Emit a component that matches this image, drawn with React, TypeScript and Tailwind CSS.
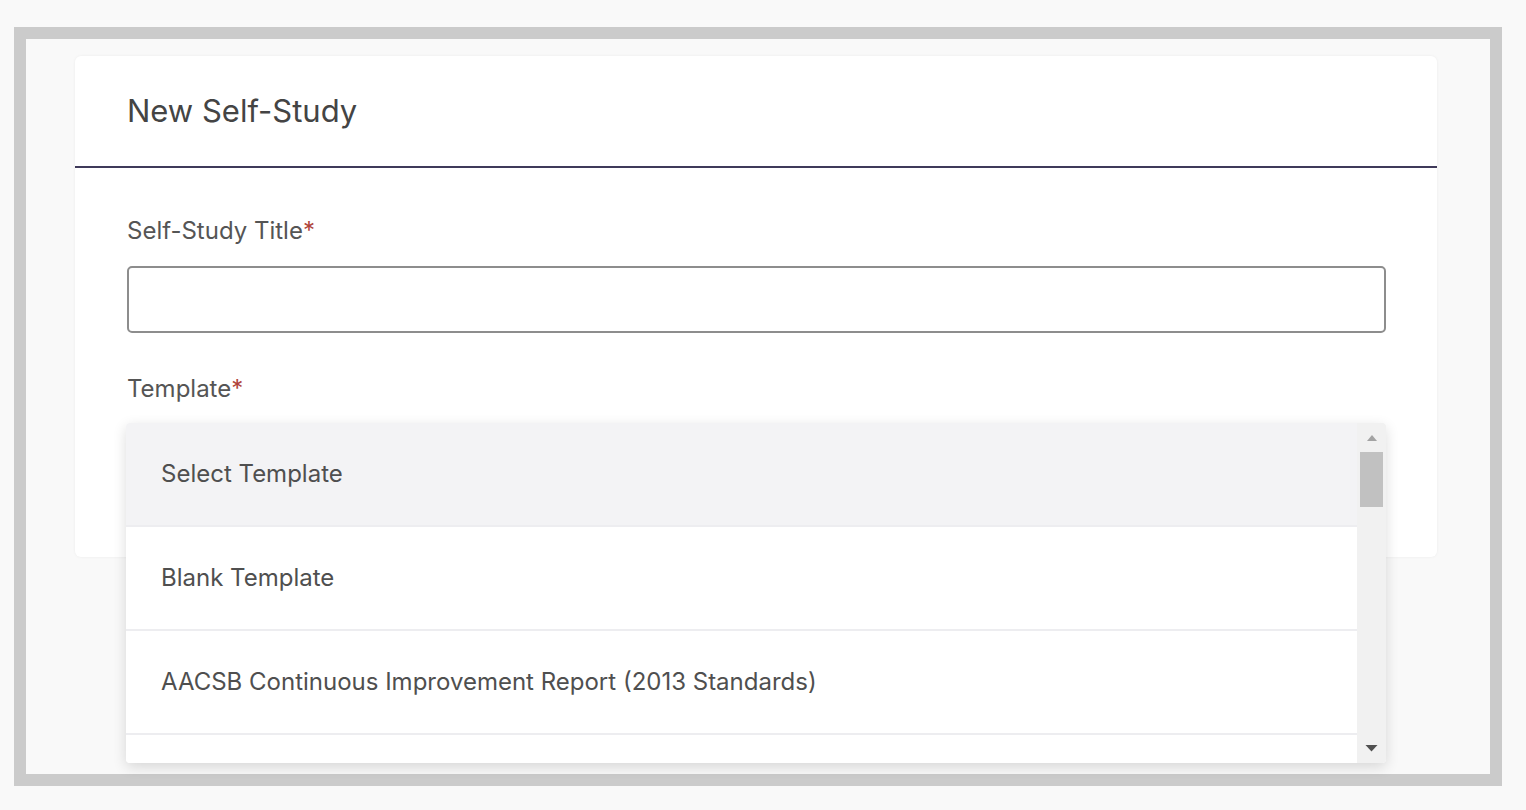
import {ChangeEvent, useState} from "react";

const options = [
    "Select Template",
    "Blank Template",
    "AACSB Continuous Improvement Report (2013 Standards)",
];

const Required = () => <span className="text-[#b0443a]">*</span>;

const TemplateDropdown = () => {
    return (
        <div
            className="absolute left-[-1px] top-0 z-10 flex h-[340px] w-[1260px] overflow-hidden rounded-[4px] bg-white shadow-[0_4px_14px_rgba(0,0,0,0.14)]">
            <ul className="flex-1 overflow-hidden">
                {options.map((opt, i) => (
                    <li
                        key={opt}
                        className={`flex h-[104px] shrink-0 items-center border-b-2 border-[#ededf0] pl-[35px] text-[24px] text-[#4f4f4f] ${i === 0 ? "bg-[#f3f3f5]" : "bg-white"}`}
                    >
                        {opt}
                    </li>
                ))}
                {/* next option is scrolled out of view */}
                <li className="h-[104px] bg-white"/>
            </ul>
            {/* fake scrollbar, the list is taller than the box */}
            <div className="flex w-[29px] flex-col items-center bg-[#f1f1f1]">
                <div className="flex h-[29px] items-center justify-center">
                    <svg width="12" height="8" viewBox="0 0 12 8">
                        <path d="M6 1 L11 7 L1 7 Z" fill="#a3a3a3"/>
                    </svg>
                </div>
                <div className="h-[55px] w-[23px] bg-[#c1c1c1]"/>
                <div className="flex-1"/>
                <div className="flex h-[30px] items-center justify-center">
                    <svg width="13" height="8" viewBox="0 0 13 8">
                        <path d="M0.5 1 L12.5 1 L6.5 7.5 Z" fill="#505050"/>
                    </svg>
                </div>
            </div>
        </div>
    );
};

const App = () => {
    const [title, setTitle] = useState("");

    return (
        <div className="min-h-[810px] bg-[#f9f9f9] pt-[27px] pl-[14px] font-['Inter',_'Liberation_Sans',_sans-serif]">
            <div className="h-[759px] w-[1488px] border-[12px] border-[#cbcbcb] bg-[#f9f9f9] pl-[49px] pt-[17px]">
                <div className="w-[1362px] rounded-[6px] bg-white shadow-[0_0_3px_rgba(0,0,0,0.06)]">
                    <div className="flex h-[112px] items-center border-b-2 border-[#3f3a5a] px-[52px]">
                        <h1 className="text-[31px] text-[#444444]">New Self-Study</h1>
                    </div>
                    <div className="px-[52px] pt-[49px] pb-[67px]">
                        <label className="block text-[24px] leading-[28px] text-[#555555]">
                            Self-Study Title<Required/>
                        </label>
                        <input
                            value={title}
                            onChange={(e: ChangeEvent<HTMLInputElement>) => setTitle(e.target.value)}
                            className="mt-[21px] block h-[67px] w-[1259px] rounded-[5px] border-2 border-[#8d8d8d] px-4 text-[20px] outline-none"
                        />
                        <label className="mt-[42px] block text-[24px] leading-[28px] text-[#555555]">
                            Template<Required/>
                        </label>
                        <div className="relative mt-[20px] h-[67px] w-[1259px]">
                            <div className="h-full rounded-[5px] border-2 border-[#8d8d8d]"/>
                            <TemplateDropdown/>
                        </div>
                    </div>
                </div>
            </div>
        </div>
    );
};

export default App;
